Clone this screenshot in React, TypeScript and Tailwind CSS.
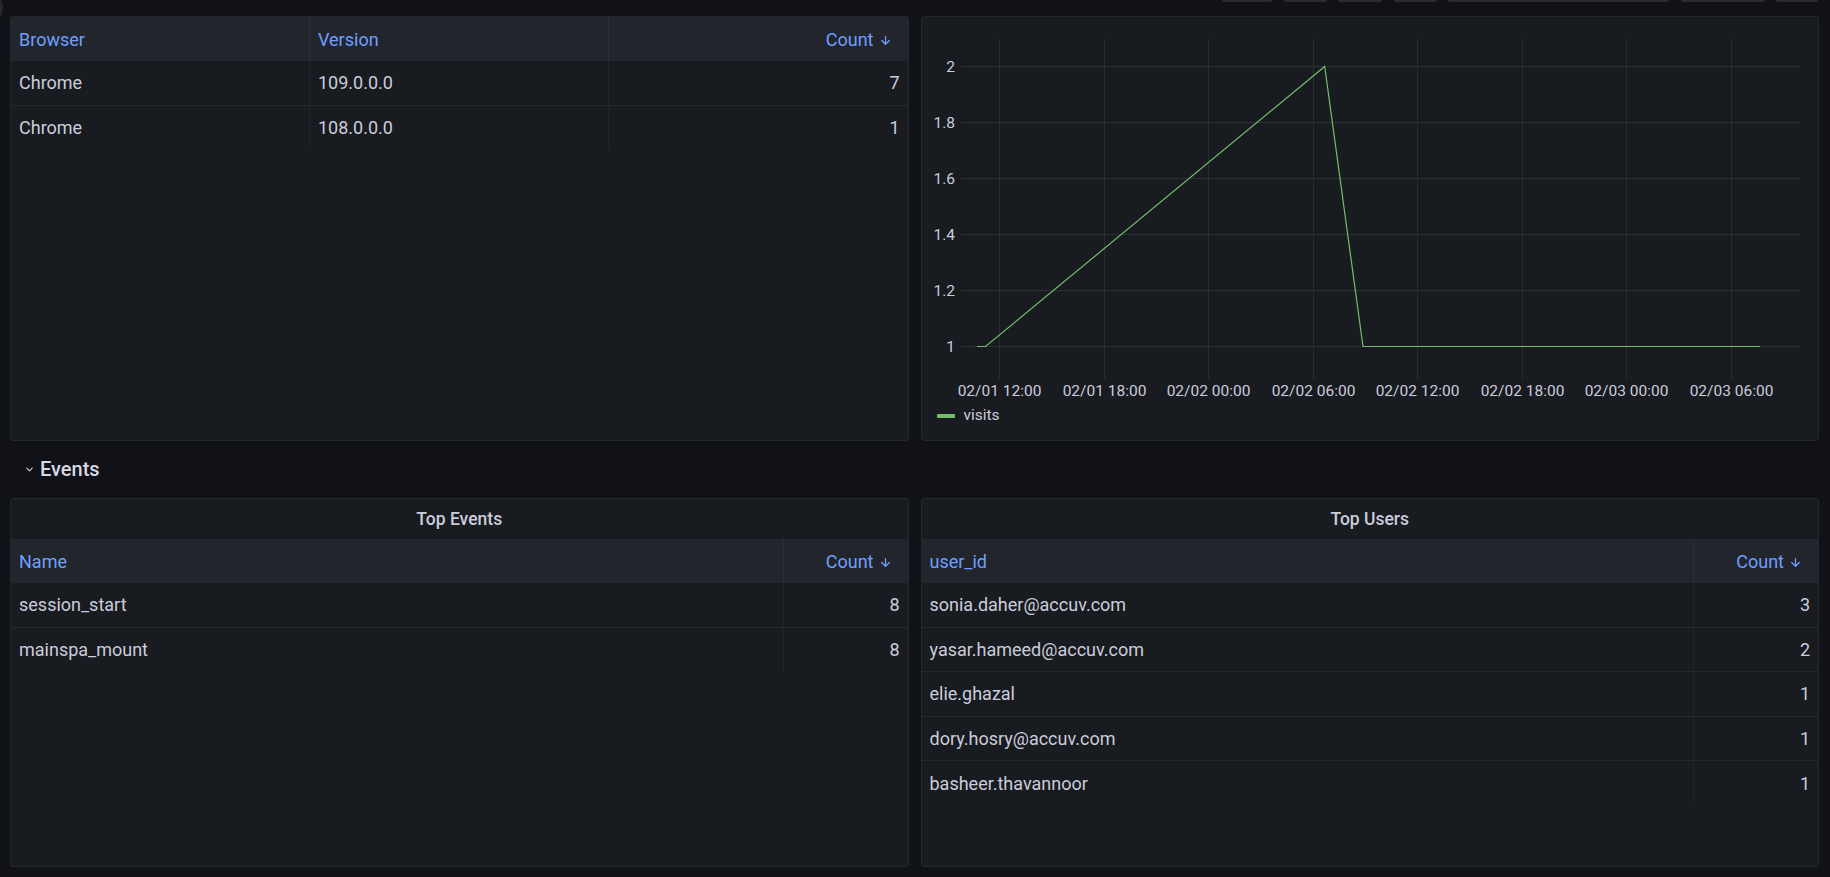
import { ArrowDown, ChevronDown } from 'lucide-react';

type Column = {
    title: string;
    width?: string;
    align?: 'left' | 'right';
};

type TableProps = {
    columns: Column[];
    rows: (string | number)[][];
};

const DataTable: React.FC<TableProps> = ({ columns, rows }) => {
    return (
        <div className="flex flex-col">
            <div className="flex h-[44px] bg-[#22252b]">
                {columns.map((col, i) => (
                    <div
                        key={col.title}
                        className={`flex items-center text-[#6e9fff] ${col.width ?? 'flex-1'} ${
                            i < columns.length - 1 ? 'border-r border-[#2b2e34]' : ''
                        } ${col.align === 'right' ? 'justify-end pr-[16px]' : 'pl-[8px]'}`}
                    >
                        {col.title}
                        {col.align === 'right' && <ArrowDown size={13} strokeWidth={2.4} className="ml-[5px] mt-[2px]" />}
                    </div>
                ))}
            </div>
            {rows.map((row, r) => (
                <div key={r} className={`flex h-[44.6px] ${r < rows.length - 1 ? 'border-b border-[#25282e]' : ''}`}>
                    {row.map((cell, i) => (
                        <div
                            key={i}
                            className={`flex items-center ${columns[i].width ?? 'flex-1'} ${
                                i < row.length - 1 ? 'border-r border-[#202328]' : ''
                            } ${columns[i].align === 'right' ? 'justify-end pr-[8px]' : 'pl-[8px]'}`}
                        >
                            {cell}
                        </div>
                    ))}
                </div>
            ))}
        </div>
    );
};

const Panel: React.FC<{ title?: string; className?: string; children: React.ReactNode }> = ({ title, className, children }) => (
    <div className={`bg-[#181b1f] border border-[#24272d] rounded-[3px] overflow-hidden ${className ?? ''}`}>
        {title && (
            <div className="h-[40px] flex items-center justify-center font-medium text-[17.5px] text-[#ccccdc]">{title}</div>
        )}
        {children}
    </div>
);

const yTicks = [
    { label: '2', y: 49 },
    { label: '1.8', y: 105 },
    { label: '1.6', y: 161 },
    { label: '1.4', y: 217 },
    { label: '1.2', y: 273 },
    { label: '1', y: 329 },
];

const xTicks = ['02/01 12:00', '02/01 18:00', '02/02 00:00', '02/02 06:00', '02/02 12:00', '02/02 18:00', '02/03 00:00', '02/03 06:00'];

const VisitsChart: React.FC = () => {
    return (
        <div className="flex flex-col">
            <svg width={896} height={388} className="block">
                {yTicks.map((t) => (
                    <g key={t.label}>
                        <line x1={39} x2={878} y1={t.y + 0.5} y2={t.y + 0.5} stroke="#2c2e34" strokeWidth={1} />
                        <text x={33} y={t.y + 5.5} textAnchor="end" fill="#ccccdc" fontSize={15.5} fontFamily="Roboto, sans-serif">
                            {t.label}
                        </text>
                    </g>
                ))}
                {xTicks.map((label, i) => {
                    const x = Math.round(77 + i * 104.57) + 0.5;
                    return (
                        <g key={label}>
                            <line x1={x} x2={x} y1={22} y2={362} stroke="#2a2c32" strokeWidth={1} />
                            <text x={x} y={378.5} textAnchor="middle" fill="#ccccdc" fontSize={15.5} fontFamily="Roboto, sans-serif">
                                {label}
                            </text>
                        </g>
                    );
                })}
                <polyline
                    points="55,329.5 63.5,329.5 402.7,49.5 441,329.5 838,329.5"
                    fill="none"
                    stroke="#73bf69"
                    strokeWidth={1.2}
                />
            </svg>
            <div className="flex items-center h-[22px] pl-[15px] text-[15.5px] text-[#ccccdc]">
                <span className="w-[18px] h-[4px] rounded-[1px] bg-[#73bf69] mr-[9px]" />
                visits
            </div>
        </div>
    );
};

export default function App() {
    return (
        <div className="relative overflow-hidden h-[877px] bg-[#111217] text-[18px] text-[#ccccdc] font-['Roboto','Liberation_Sans',sans-serif]">
            <div className="absolute -left-[29px] -top-[8px] w-[32px] h-[32px] rounded-full bg-[#25272c]" />
            <div className="h-[16px] flex justify-end gap-[11.5px] pr-[12px]">
                <div className="w-[50px] h-[2px] rounded-b-sm bg-[#2a2c32]" />
                <div className="w-[43px] h-[2px] rounded-b-sm bg-[#2a2c32]" />
                <div className="w-[44px] h-[2px] rounded-b-sm bg-[#2a2c32]" />
                <div className="w-[43px] h-[2px] rounded-b-sm bg-[#2a2c32]" />
                <div className="w-[221px] h-[2px] rounded-b-sm bg-[#2a2c32]" />
                <div className="w-[84px] h-[2px] rounded-b-sm bg-[#2a2c32]" />
                <div className="w-[42px] h-[2px] rounded-b-sm bg-[#2a2c32]" />
            </div>

            <div className="grid grid-cols-2 gap-[12px] pl-[10px] pr-[11px]">
                <Panel className="h-[425px]">
                    <DataTable
                        columns={[
                            { title: 'Browser', width: 'w-[299px]' },
                            { title: 'Version', width: 'w-[299px]' },
                            { title: 'Count', align: 'right' },
                        ]}
                        rows={[
                            ['Chrome', '109.0.0.0', 7],
                            ['Chrome', '108.0.0.0', 1],
                        ]}
                    />
                </Panel>
                <Panel className="h-[425px]">
                    <VisitsChart />
                </Panel>
            </div>

            <div className="h-[57px] flex items-center pl-[24px] pb-[1px]">
                <ChevronDown size={11} strokeWidth={2.5} className="mr-[5px] mt-[1px]" />
                <span className="text-[20px] font-medium text-[#d8d9e3]">Events</span>
            </div>

            <div className="grid grid-cols-2 gap-[12px] pl-[10px] pr-[11px]">
                <Panel title="Top Events" className="h-[369px]">
                    <DataTable
                        columns={[
                            { title: 'Name', width: 'w-[773px]' },
                            { title: 'Count', align: 'right' },
                        ]}
                        rows={[
                            ['session_start', 8],
                            ['mainspa_mount', 8],
                        ]}
                    />
                </Panel>
                <Panel title="Top Users" className="h-[369px]">
                    <DataTable
                        columns={[
                            { title: 'user_id', width: 'w-[772px]' },
                            { title: 'Count', align: 'right' },
                        ]}
                        rows={[
                            ['sonia.daher@accuv.com', 3],
                            ['yasar.hameed@accuv.com', 2],
                            ['elie.ghazal', 1],
                            ['dory.hosry@accuv.com', 1],
                            ['basheer.thavannoor', 1],
                        ]}
                    />
                </Panel>
            </div>
        </div>
    );
}
